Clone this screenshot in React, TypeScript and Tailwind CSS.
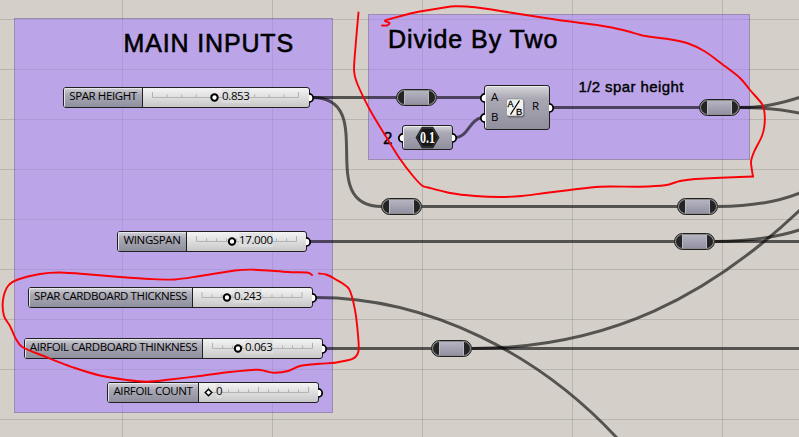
import React from 'react';

const LABEL_FONT = "font-['Open_Sans','Noto_Sans',sans-serif]";
const TITLE_FONT = "font-['Liberation_Sans',Arial,sans-serif]";

function Grip({ place, side }: { place: string; side: 'in' | 'out' }) {
  return (
    <svg className={`absolute overflow-visible ${place}`} width="5" height="10" viewBox="0 0 5 10">
      {side === 'out' ? (
        <path d="M0 0.8 A4.2 4.2 0 0 1 0 9.2" fill="#fff" stroke="#000" strokeWidth="1.8" />
      ) : (
        <path d="M5 0.8 A4.2 4.2 0 0 0 5 9.2" fill="#fff" stroke="#000" strokeWidth="1.8" />
      )}
    </svg>
  );
}

type SliderProps = {
  box: string;
  labelBox: string;
  label: string;
  value: string;
  valueBox: string;
  start: number;
  step: number;
  knob: number;
  diamond?: boolean;
};

function Slider({ box, labelBox, label, value, valueBox, start, step, knob, diamond }: SliderProps) {
  const ticks = Array.from({ length: 11 }, (_, i) => i);
  return (
    <div className={`absolute h-[21px] ${box}`}>
      <div className="relative flex h-full overflow-hidden rounded-[3px] border border-[#202020] bg-linear-to-b from-[#f4f4f4] via-[#dedede] to-[#c8c8c8]">
        <div
          className={`flex shrink-0 items-center justify-center border-r border-[#202020] bg-linear-to-b from-[#d2d2d8] from-0% via-[#a9a8b4] via-35% to-[#908f9e] shadow-[inset_1px_1px_0_#e6e6ea] ${labelBox}`}
        >
          <span className={`relative -top-[1.5px] whitespace-nowrap text-[11.5px] leading-none tracking-[-0.4px] text-black ${LABEL_FONT}`}>{label}</span>
        </div>
        <svg className="h-[19px] flex-1 overflow-visible" width="10" height="19">
          {ticks.map((i) => {
            const x = start + i * step;
            const tall = i === 0 || i === 5 || i === 10;
            return <path key={i} d={`M${x} ${tall ? 4 : 6.5} V9.5`} stroke="#aaaaaa" strokeWidth="0.9" />;
          })}
          <path d={`M${start} 9.5 H${start + 10 * step}`} stroke="#b4b4b4" strokeWidth="1" />
          {diamond ? (
            <path d={`M${knob} 6.2 l3.3 3.3 l-3.3 3.3 l-3.3 -3.3 Z`} fill="#fff" stroke="#000" strokeWidth="1.4" />
          ) : (
            <circle cx={knob} cy="9.5" r="3.2" fill="#fff" stroke="#000" strokeWidth="2" />
          )}
        </svg>
        <span className={`absolute top-px whitespace-nowrap bg-[#dedede]/70 text-[11.5px] leading-[14px] tracking-[-0.35px] text-black ${LABEL_FONT} ${valueBox}`}>
          {value}
        </span>
      </div>
      <Grip place="-right-[4px] top-[5.5px]" side="out" />
    </div>
  );
}

function Relay({ place }: { place: string }) {
  return (
    <div className={`absolute h-[17px] w-[41px] rounded-full border border-[#202020] bg-[#8b8b8b] p-px ${place}`}>
      <div className="flex h-full justify-center overflow-hidden rounded-full bg-[#242424]">
        <div className="-my-px w-[25px] border-x border-[#b9b9c0] bg-linear-to-b from-[#b8b7c4] to-[#918fa0] shadow-[inset_0_1px_0_#eeeeee]" />
      </div>
    </div>
  );
}

const METAL = 'rounded-[3px] border border-[#202020] bg-linear-to-b from-[#d6d6da] via-[#a9a8b3] via-30% to-[#918f9d] shadow-[inset_1px_1px_0_#eeeeee]';

function DivisionNode() {
  return (
    <div className="absolute left-[484px] top-[85px] h-[45px] w-[66px]">
      <div className={`relative flex h-full items-center ${METAL} ${LABEL_FONT}`}>
        <div className="relative -top-px flex w-[20px] flex-col pl-[6px] text-[11.5px] leading-[20px]">
          <span>A</span>
          <span>B</span>
        </div>
        <svg width="20" height="20" viewBox="0 0 20 20">
          <rect x="2.5" y="2" width="17" height="17.5" rx="2" fill="#55555f" opacity="0.7" />
          <rect x="1.5" y="1" width="17" height="17" rx="2" fill="#f1f1ef" stroke="#777" strokeWidth="0.5" />
          <path d="M5.5 16.5 L14.5 2.5" stroke="#000" strokeWidth="1.3" />
          <text x="2.6" y="9.2" fontSize="9" fontFamily="Liberation Sans, sans-serif" stroke="#000" strokeWidth="0.3">A</text>
          <text x="11.1" y="17" fontSize="9.5" fontFamily="Liberation Sans, sans-serif" stroke="#000" strokeWidth="0.3">B</text>
        </svg>
        <span className="relative -top-[1.5px] ml-[7px] text-[11.5px] leading-none">R</span>
      </div>
      <Grip place="-left-[4px] top-[7.5px]" side="in" />
      <Grip place="-left-[4px] top-[27.5px]" side="in" />
      <Grip place="-right-[4px] top-[17.5px]" side="out" />
    </div>
  );
}

function NumberNode() {
  return (
    <div className="absolute left-[402px] top-[125px] h-[25px] w-[51px]">
      <div className={`relative flex h-full items-center justify-center ${METAL}`}>
        <svg width="25" height="23" viewBox="0 0 25 23">
          <path d="M7 1.2 H18 L24 11.5 L18 21.8 H7 L1 11.5 Z" fill="#161616" stroke="#000" strokeWidth="0.6" />
          <path d="M7.5 2.2 H17.5 L22.8 11.5 L17.5 20.8 H7.5 L2.2 11.5 Z" fill="none" stroke="#555" strokeWidth="0.7" />
          <text
            x="5"
            y="17"
            fontSize="16"
            fontWeight="bold"
            textLength="15"
            lengthAdjust="spacingAndGlyphs"
            fill="#fff"
            fontFamily="Liberation Serif, serif"
          >
            0.1
          </text>
        </svg>
      </div>
      <Grip place="-left-[4px] top-[7.5px]" side="in" />
      <Grip place="-right-[4px] top-[7.5px]" side="out" />
    </div>
  );
}

const wires = [
  'M312 97.5 H397',
  'M312 97.5 C380 97.5 313 206.5 382 206.5',
  'M437 97.5 H481',
  'M456 137.5 C468 137 469 120 482 117.5',
  'M552 107.5 H700',
  'M740 107.5 C765 107.5 782 103 801 97',
  'M740 107.5 C765 107.5 782 109 801 113.5',
  'M422 206.5 H678',
  'M718 206.5 C750 206.5 775 203 801 192.5',
  'M310 241.5 H675',
  'M715 241.5 H799',
  'M715 241.5 C750 241.5 775 238 801 229.5',
  'M316 297.5 C430 297.5 540 355 617 438',
  'M326 348.5 H432',
  'M472 348.5 H799',
  'M472 348.5 C610 348.5 710 295 800 210',
];

const upperLoop: [number, number][] = [
  [358.5, 12.5], [356, 41], [354, 70], [357, 83], [370, 110], [385, 135], [400, 159], [413, 176], [422, 185.5], [428, 187.5],
  [450, 193], [475, 196], [500, 197], [522, 196], [545, 193], [570, 190], [600, 186.7], [640, 186.7], [665, 185.3], [680, 181],
  [695, 179], [715, 178], [753, 176.5],
];

const upperLoopRight: [number, number][] = [
  [753, 176.5], [751, 162], [754, 152], [762, 136], [764.5, 125], [764.5, 113], [762, 104], [750, 90], [740, 78], [722, 64],
  [705, 51.5], [687, 43], [668, 39], [645, 36], [625, 30.5], [600, 25.5], [560, 20.3], [510, 12.5], [475, 7.3], [455, 6.3],
  [443, 7.7], [415, 12.5], [392, 18.5], [385, 20.8], [389.5, 23], [387, 25.5], [382, 25.5],
];

const lowerLoop: [number, number][] = [
  [312, 275], [307, 272.5], [288, 272], [255, 269.7], [235, 270.5], [200, 276], [175, 279.5], [150, 279], [120, 277],
  [90, 274.5], [60, 272.5], [40, 274], [18, 279.5], [8, 286], [3, 300], [4, 316], [10, 326], [16, 339], [23, 347.5],
  [45, 356.5], [75, 368], [100, 375.5], [125, 379.7], [147, 381.7], [170, 379.5], [200, 376], [230, 372], [257, 369.7],
  [266, 371.3], [275, 372.8], [288, 371], [300, 366], [320, 363.7], [335, 362.7], [353, 358.7], [358.5, 351], [358, 335],
  [355, 310], [349, 289], [335, 279], [326, 274.5], [319, 273.5],
];

// Smooths a pen stroke through its sampled points.
function stroke(points: [number, number][]) {
  let d = `M${points[0][0]} ${points[0][1]}`;
  for (let i = 0; i < points.length - 1; i++) {
    const a = points[Math.max(0, i - 1)];
    const b = points[i];
    const c = points[i + 1];
    const e = points[Math.min(points.length - 1, i + 2)];
    d += ` C${b[0] + (c[0] - a[0]) / 7} ${b[1] + (c[1] - a[1]) / 7} ${c[0] - (e[0] - b[0]) / 7} ${c[1] - (e[1] - b[1]) / 7} ${c[0]} ${c[1]}`;
  }
  return d;
}

export default function App() {
  return (
    <main className="relative h-[437px] w-[799px] overflow-hidden bg-[#d4cfc8]">
      <section className="absolute left-[14px] top-[18px] h-[395px] w-[319px] border border-[#9b8caf] bg-[#bba5e8]" />
      <section className="absolute left-[368px] top-[14px] h-[146px] w-[382px] border border-[#9b8caf] bg-[#bba5e8]" />

      <svg className="absolute inset-0" width="799" height="437">
        <g stroke="#000" strokeOpacity="0.13">
          {[122.5, 272.5, 422.5, 572.5, 722.5].map((x) => (
            <path key={x} d={`M${x} 0 V437`} />
          ))}
          {[19.5, 69.5, 119.5, 169.5, 219.5, 269.5, 319.5, 369.5, 419.5].map((y) => (
            <path key={y} d={`M0 ${y} H799`} />
          ))}
        </g>
        <g fill="#bba5e8" fillOpacity="0.5">
          <rect x="15" y="19" width="317" height="393" />
          <rect x="369" y="15" width="380" height="144" />
        </g>
        <g fill="none" stroke="#000" strokeOpacity="0.6" strokeWidth="3">
          {wires.map((d) => (
            <path key={d} d={d} />
          ))}
        </g>
      </svg>

      <h1 className={`absolute left-[123.5px] top-[28px] whitespace-nowrap text-[25px] leading-[30px] tracking-[0.85px] [-webkit-text-stroke:0.6px_#000] ${TITLE_FONT}`}>
        MAIN INPUTS
      </h1>
      <h2 className={`absolute left-[388px] top-[24px] whitespace-nowrap text-[25px] leading-[30px] tracking-[0.95px] [-webkit-text-stroke:0.6px_#000] ${TITLE_FONT}`}>
        Divide By Two
      </h2>
      <p className={`absolute left-[578.5px] top-[78px] whitespace-nowrap text-[15px] leading-[18px] tracking-[0.4px] [-webkit-text-stroke:0.4px_#000] ${TITLE_FONT}`}>
        1/2 spar height
      </p>
      <p className={`absolute left-[383px] top-[130px] text-[17px] leading-[18px] [-webkit-text-stroke:0.3px_#000] ${TITLE_FONT}`}>2</p>

      <Slider box="left-[63px] top-[87px] w-[247px]" labelBox="w-[79px]" label="SPAR HEIGHT" value="0.853" valueBox="left-[158px]" start={9.5} step={14.6} knob={71.5} />
      <Slider box="left-[117px] top-[231px] w-[190px]" labelBox="w-[69px]" label="WINGSPAN" value="17.000" valueBox="left-[121px]" start={9.5} step={10} knob={45} />
      <Slider box="left-[28px] top-[287px] w-[285px]" labelBox="w-[164px]" label="SPAR CARDBOARD THICKNESS" value="0.243" valueBox="left-[205px]" start={9} step={10} knob={34} />
      <Slider box="left-[24px] top-[338px] w-[299px]" labelBox="w-[178px]" label="AIRFOIL CARDBOARD THINKNESS" value="0.063" valueBox="left-[220px]" start={9.5} step={10} knob={35} />
      <Slider box="left-[107px] top-[382px] w-[212px]" labelBox="w-[91px]" label="AIRFOIL COUNT" value="0" valueBox="left-[108px]" start={9.5} step={10} knob={9.5} diamond />

      <Relay place="left-[396px] top-[89px]" />
      <Relay place="left-[699px] top-[99px]" />
      <Relay place="left-[381px] top-[198px]" />
      <Relay place="left-[677px] top-[198px]" />
      <Relay place="left-[674px] top-[233px]" />
      <Relay place="left-[431px] top-[340px]" />
      <DivisionNode />
      <NumberNode />

      <svg className="pointer-events-none absolute inset-0" width="799" height="437">
        <g fill="none" stroke="#fb0007" strokeWidth="1.9" strokeLinecap="round" strokeLinejoin="round">
          <path d={stroke(upperLoop)} />
          <path d={stroke(upperLoopRight)} />
          <path d={stroke(lowerLoop)} />
        </g>
      </svg>
    </main>
  );
}
